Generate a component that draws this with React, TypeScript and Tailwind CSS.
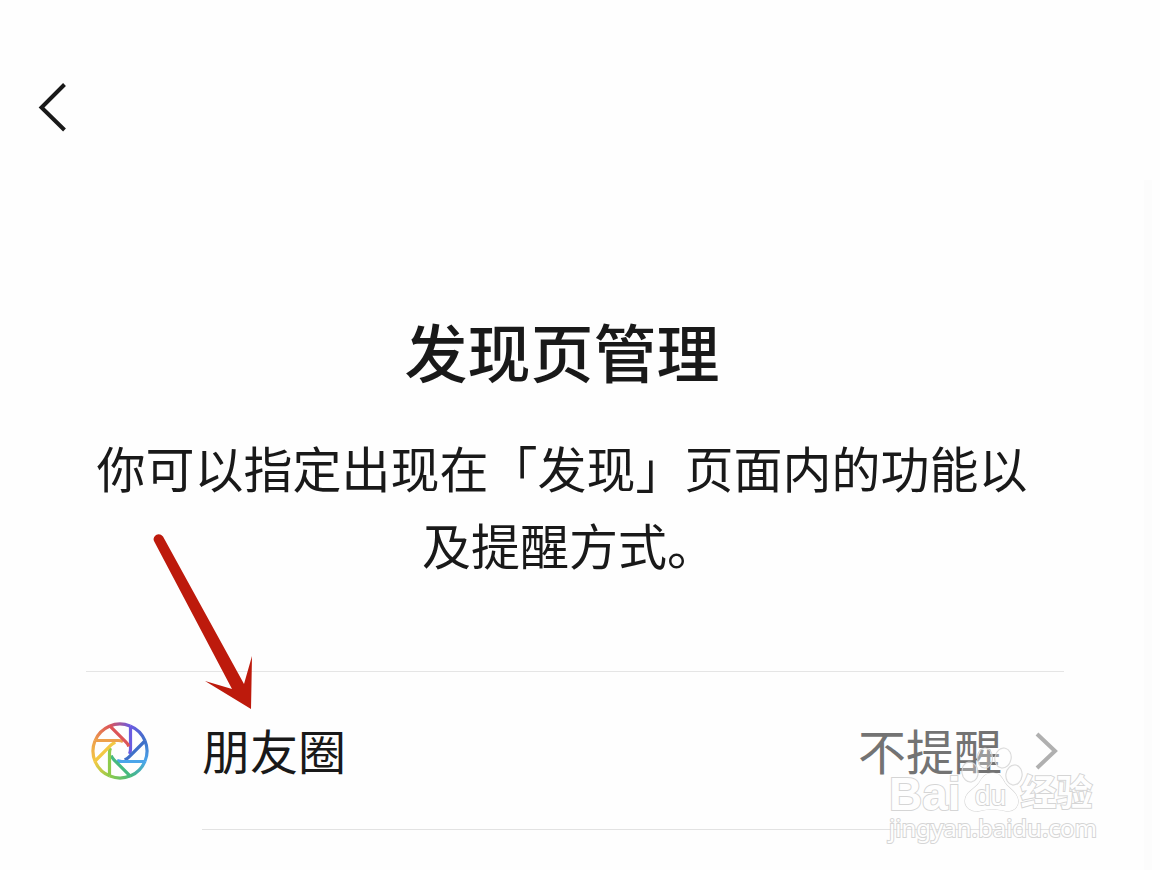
const SPOKES = [
  '#6b5be0',
  '#3f70c8',
  '#4ba5ea',
  '#45b97f',
  '#8ecb4b',
  '#f3c843',
  '#eda04c',
  '#dc5558',
];

const STEP = Math.PI / 4;
const START = Math.atan2(-25, 10);

function ringPoint(index: number) {
  const angle = START + index * STEP;
  return { x: 30 + 27 * Math.cos(angle), y: 30 + 27 * Math.sin(angle) };
}

function MomentsIcon() {
  return (
    <svg viewBox="0 0 60 60" fill="none" strokeWidth="3.200" className="h-15 w-15" aria-hidden="true">
      {SPOKES.map((color, i) => {
        const a = ringPoint(i);
        const b = ringPoint(i + 1);
        const next = SPOKES[(i + 1) % SPOKES.length];
        return (
          <g key={color}>
            <linearGradient id={`ring-${i}`} gradientUnits="userSpaceOnUse" x1={a.x} y1={a.y} x2={b.x} y2={b.y}>
              <stop offset="0" stopColor={color} />
              <stop offset="1" stopColor={next} />
            </linearGradient>
            <path d={`M${a.x} ${a.y}A27 27 0 0 1 ${b.x} ${b.y}`} stroke={`url(#ring-${i})`} />
            <path d="M40.500 5V28Q40.500 31 39.500 33" stroke={color} transform={`rotate(${i * 45} 30 30)`} />
          </g>
        );
      })}
    </svg>
  );
}

function PointerArrow() {
  return (
    <svg viewBox="0 0 100 176" className="pointer-events-none absolute top-[534px] left-[153px] h-44 w-[100px]" aria-hidden="true">
      <path d="M10 2.500Q7-1 3 1Q-1 4 1.500 8L79 155L52 147L98 175L99 122L91 150Z" fill="#bd1a0c" />
    </svg>
  );
}

function Paw() {
  return (
    <svg viewBox="0 0 64 66" className="h-[66px] w-16" fill="#fff" stroke="#cfcfcf" strokeWidth="1.200" aria-hidden="true">
      <g fillOpacity=".35">
        <ellipse cx="9" cy="26" rx="8" ry="10" transform="rotate(-8 9 26)" />
        <ellipse cx="24" cy="12" rx="7.500" ry="10" />
        <ellipse cx="42" cy="12" rx="8" ry="10" transform="rotate(12 42 12)" />
        <ellipse cx="53" cy="29" rx="8" ry="10" transform="rotate(8 53 29)" />
      </g>
      <path d="M32 27C24 27 21 32 18 37C14 43 4 46 4 55C4 62 11 66 18 65C23 64 27 63 31 63C35 63 40 64 45 65C52 66 58 61 57 54C56 46 48 43 44 37C41 32 39 27 32 27Z" />
    </svg>
  );
}

function Watermark() {
  return (
    <div className="pointer-events-none absolute top-[746px] left-[889px] font-['Liberation_Sans','Noto_Sans_CJK_SC',sans-serif] text-white opacity-85 [-webkit-text-stroke:2px_#cfcfcf] [paint-order:stroke_fill]">
      <div className="flex h-[66px] items-end whitespace-nowrap">
        <span className="text-[46px] leading-9 font-bold">Bai</span>
        <span className="relative">
          <Paw />
          <span className="absolute inset-x-0 bottom-0 pr-1 text-center text-[28px] leading-8">du</span>
        </span>
        <span className="-ml-1 text-[36px] leading-9 font-bold">经验</span>
      </div>
      <div className="font-['Noto_Sans',sans-serif] text-[24px] leading-8">jingyan.baidu.com</div>
    </div>
  );
}

export default function App() {
  return (
    <div
      lang="zh-CN"
      className="relative min-h-screen overflow-hidden bg-[#fefefe] pr-24 pl-[86px] font-['Noto_Sans_CJK_SC',sans-serif] text-[#191919]"
    >
      <header className="-ml-12 flex pt-20">
        <button type="button" aria-label="返回" className="h-14 w-8">
          <svg viewBox="0 0 32 56" fill="none" stroke="currentColor" strokeWidth="4" className="h-14 w-8">
            <path d="M26.500 4.500L3.500 27.500L26.500 50" />
          </svg>
        </button>
      </header>

      <main>
        <section className="pt-42 pr-[26px] text-center">
          <h1 className="text-[63px] leading-[92px] font-medium">发现页管理</h1>
          <p className="pt-8 text-[49px] leading-[77px]">
            你可以指定出现在「发现」页面内的功能以及提醒方式<span className="-mr-3.5">。</span>
          </p>
        </section>

        <ul className="mt-[89px] border-t border-[#e5e5e5]">
          <li>
            <button type="button" className="flex w-full items-stretch text-left text-[48px] leading-[72px]">
              <span className="flex w-[116px] shrink-0 items-center pl-1">
                <MomentsIcon />
              </span>
              <span className="flex h-[158px] flex-1 items-center border-b border-[#e2e2e2]">
                <span className="flex-1 pb-1">朋友圈</span>
                <span className="pb-1 text-[#737373]">不提醒</span>
                <svg viewBox="0 0 32 40" fill="none" stroke="#b0b0b0" strokeWidth="4" className="mr-0.5 ml-7 h-10 w-8" aria-hidden="true">
                  <path d="M7 3L25 20L7 37" />
                </svg>
              </span>
            </button>
          </li>
        </ul>
      </main>

      <div className="absolute top-[180px] right-2 bottom-0 w-2 bg-[#fcfcfc]" />
      <PointerArrow />
      <Watermark />
    </div>
  );
}
